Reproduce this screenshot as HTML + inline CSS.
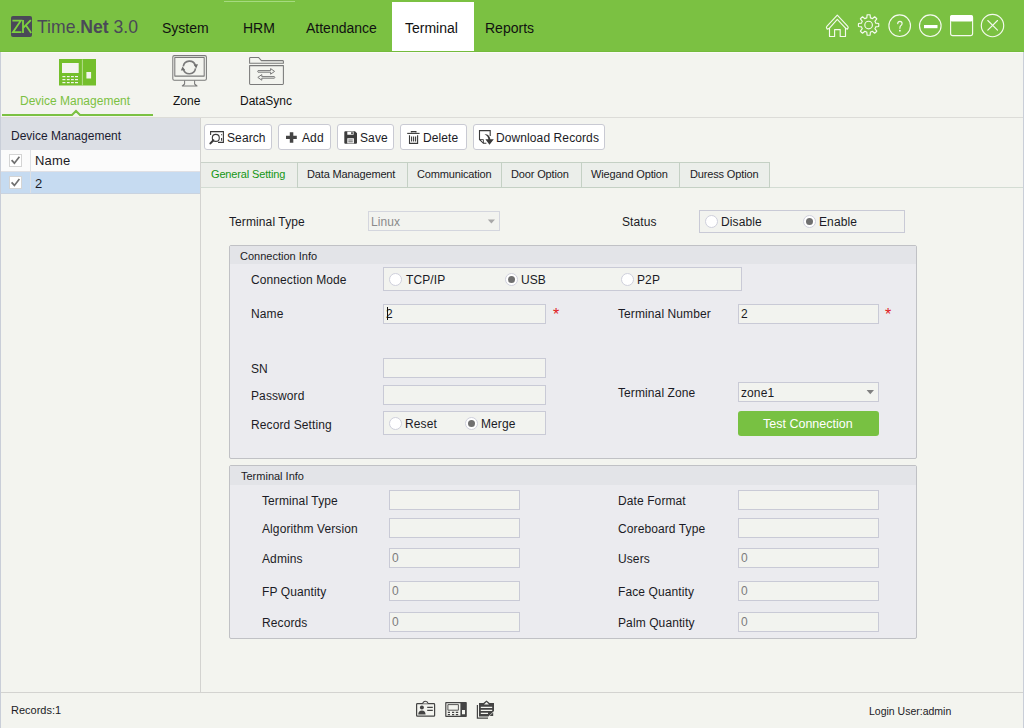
<!DOCTYPE html>
<html><head><meta charset="utf-8">
<style>
*{margin:0;padding:0;box-sizing:border-box}
html,body{width:1024px;height:728px;overflow:hidden;background:#f3f4ef;font-family:"Liberation Sans",sans-serif;color:#1b1b25}
.a{position:absolute;white-space:nowrap}
.t{position:absolute;white-space:nowrap;line-height:1}
#top{position:absolute;left:0;top:0;width:1024px;height:52px;background:#7bc142}
.menu{font-size:14px;color:#111;top:21px !important}
.inp{position:absolute;background:#f2f3ef;border:1px solid #c9cad6}
.radio{position:absolute;width:13px;height:13px;border-radius:50%;background:#fff;border:1px solid #cfd0dc}
.radio.on::after{content:"";position:absolute;left:2px;top:2px;width:7px;height:7px;border-radius:50%;background:#707070}
.lbl{font-size:12px;letter-spacing:0.1px}
.grp{position:absolute;border:1px solid #c0c1c5;border-radius:2px;background:#ebebef}
.grph{position:absolute;left:0;top:0;right:0;height:18px;background:#e3e4e8}
.btn{position:absolute;top:124px;height:26px;background:#fff;border:1px solid #c9cad3;border-radius:3px}
.tab{position:absolute;top:162px;height:26px;background:#ebeeea;border:1px solid #c4d0c4;border-left:none}
.tt{font-size:11px;letter-spacing:-0.15px}
</style></head><body>
<!-- top bar -->
<div id="top"></div>
<div class="a" style="left:224px;top:1px;width:71px;height:1px;background:#a6da80"></div>
<div class="a" style="left:11px;top:16px;width:21px;height:21px;background:#4a4958;border-radius:2px"></div>
<svg class="a" style="left:0;top:0" width="40" height="40" viewBox="0 0 40 40"><g fill="none" stroke="#7ed23f" stroke-width="1.8"><path d="M12.4 20.7H20.8L13 32.2H21.4"/><path d="M23 20V33M30.8 20.2L23.4 27.6M25.9 25.2L31.2 33"/></g></svg>
<div class="t" style="left:37px;top:17px;font-size:19px;color:#4a4958;transform:scaleX(0.925);transform-origin:0 0">Time.<span style="font-weight:bold">Net</span> 3.0</div>

<div class="t menu" style="left:162px;top:20px">System</div>
<div class="t menu" style="left:243px;top:20px">HRM</div>
<div class="t menu" style="left:306px;top:20px">Attendance</div>
<div class="a" style="left:392px;top:2px;width:82px;height:50px;background:#fff"></div>
<div class="t menu" style="left:405px;top:20px">Terminal</div>
<div class="t menu" style="left:485px;top:20px">Reports</div>

<!-- sub toolbar -->
<div class="a" style="left:0;top:51px;width:1024px;height:1px;background:#74bb3c"></div><div class="a" style="left:0;top:52px;width:1024px;height:1px;background:#fafaf7"></div>
<div class="a" style="left:0;top:117px;width:1024px;height:1px;background:#dcdcd8"></div>
<svg class="a" style="left:0;top:108px" width="160" height="10" viewBox="0 108 160 10"><path d="M2 115H72L76 111L80 115H153" fill="none" stroke="#7bc142" stroke-width="2"/></svg>
<div class="t" style="left:20px;top:95px;font-size:12px;color:#7bc142">Device Management</div>
<div class="t" style="left:173px;top:95px;font-size:12px;color:#111">Zone</div>
<div class="t" style="left:240px;top:95px;font-size:12px;color:#111">DataSync</div>

<!-- left panel -->
<div class="a" style="left:0;top:118px;width:200px;height:32px;background:#dcdfe5"></div>
<div class="t" style="left:11px;top:130px;font-size:12px;color:#1b1b30">Device Management</div>
<div class="a" style="left:1px;top:150px;width:199px;height:22px;background:#fbfbfb;border-bottom:1px solid #e0e0e4"></div>
<div class="a" style="left:1px;top:172px;width:199px;height:22px;background:#c6dbf1;border-bottom:1px solid #c9d3e0"></div>
<div class="a" style="left:30px;top:150px;width:1px;height:43px;background:#dde0e4"></div>
<div class="a" style="left:9px;top:154px;width:13px;height:13px;background:#fff;border:1px solid #d4d4d4"></div>
<div class="a" style="left:9px;top:176px;width:13px;height:13px;background:#fff;border:1px solid #d4d4d4"></div>
<div class="t" style="left:35px;top:154px;font-size:13px;letter-spacing:0.2px">Name</div>
<div class="t" style="left:35px;top:177px;font-size:13px">2</div>
<div class="a" style="left:200px;top:118px;width:1px;height:574px;background:#d3d3d0"></div>

<!-- buttons -->
<div class="btn" style="left:204px;width:68px"></div>
<div class="t lbl" style="left:227px;top:132px">Search</div>
<div class="btn" style="left:278px;width:53px"></div>
<div class="t lbl" style="left:302px;top:132px">Add</div>
<div class="btn" style="left:337px;width:57px"></div>
<div class="t lbl" style="left:360px;top:132px">Save</div>
<div class="btn" style="left:400px;width:67px"></div>
<div class="t lbl" style="left:423px;top:132px">Delete</div>
<div class="btn" style="left:473px;width:132px"></div>
<div class="t lbl" style="left:496px;top:132px">Download Records</div>

<!-- tabs -->
<div class="a" style="left:201px;top:187px;width:822px;height:1px;background:#d3dcd3"></div>
<div class="a" style="left:201px;top:162px;width:568px;height:1px;background:#c9d2c9"></div>
<div class="a" style="left:201px;top:163px;width:96px;height:24px;background:#ecEEea"></div>
<div class="tab" style="left:297px;width:111px;border-left:1px solid #c4d0c4"></div>
<div class="tab" style="left:408px;width:94px"></div>
<div class="tab" style="left:502px;width:80px"></div>
<div class="tab" style="left:582px;width:98px"></div>
<div class="tab" style="left:680px;width:90px"></div>
<div class="t tt" style="left:211px;top:169px;color:#149614">General Setting</div>
<div class="t tt" style="left:307px;top:169px">Data Management</div>
<div class="t tt" style="left:417px;top:169px">Communication</div>
<div class="t tt" style="left:511px;top:169px">Door Option</div>
<div class="t tt" style="left:591px;top:169px">Wiegand Option</div>
<div class="t tt" style="left:690px;top:169px">Duress Option</div>

<!-- form -->
<div class="t lbl" style="left:229px;top:216px">Terminal Type</div>
<div class="inp" style="left:368px;top:211px;width:132px;height:20px;border-color:#d4d6de"></div>
<div class="t lbl" style="left:371px;top:216px;color:#8a8a8a">Linux</div>
<div class="t lbl" style="left:622px;top:216px">Status</div>
<div class="inp" style="left:699px;top:210px;width:206px;height:23px"></div>
<div class="radio" style="left:705px;top:215px"></div>
<div class="t lbl" style="left:721px;top:216px">Disable</div>
<div class="radio on" style="left:803px;top:215px"></div>
<div class="t lbl" style="left:819px;top:216px">Enable</div>

<div class="grp" style="left:229px;top:245px;width:688px;height:214px"><div class="grph"></div></div>
<div class="t" style="left:240px;top:251px;font-size:11px">Connection Info</div>
<div class="t lbl" style="left:251px;top:274px">Connection Mode</div>
<div class="inp" style="left:383px;top:267px;width:359px;height:24px"></div>
<div class="radio" style="left:389px;top:273px"></div>
<div class="t lbl" style="left:406px;top:274px">TCP/IP</div>
<div class="radio on" style="left:505px;top:273px"></div>
<div class="t lbl" style="left:521px;top:274px">USB</div>
<div class="radio" style="left:621px;top:273px"></div>
<div class="t lbl" style="left:637px;top:274px">P2P</div>

<div class="t lbl" style="left:251px;top:308px">Name</div>
<div class="inp" style="left:383px;top:304px;width:163px;height:20px"></div>
<div class="t lbl" style="left:386px;top:308px">2</div>
<div class="a" style="left:387px;top:307px;width:1.4px;height:13px;background:#111"></div>
<div class="t" style="left:553px;top:307px;font-size:16px;color:#e02020">*</div>
<div class="t lbl" style="left:618px;top:308px">Terminal Number</div>
<div class="inp" style="left:738px;top:304px;width:141px;height:20px"></div>
<div class="t lbl" style="left:741px;top:308px">2</div>
<div class="t" style="left:885px;top:307px;font-size:16px;color:#e02020">*</div>

<div class="t lbl" style="left:251px;top:363px">SN</div>
<div class="inp" style="left:383px;top:358px;width:163px;height:20px"></div>
<div class="t lbl" style="left:251px;top:390px">Password</div>
<div class="inp" style="left:383px;top:385px;width:163px;height:20px"></div>
<div class="t lbl" style="left:251px;top:419px">Record Setting</div>
<div class="inp" style="left:383px;top:411px;width:163px;height:24px"></div>
<div class="radio" style="left:389px;top:417px"></div>
<div class="t lbl" style="left:405px;top:418px">Reset</div>
<div class="radio on" style="left:465px;top:417px"></div>
<div class="t lbl" style="left:481px;top:418px">Merge</div>

<div class="t lbl" style="left:618px;top:387px">Terminal Zone</div>
<div class="inp" style="left:738px;top:382px;width:141px;height:20px"></div>
<div class="t lbl" style="left:741px;top:387px">zone1</div>
<div class="a" style="left:738px;top:411px;width:141px;height:25px;background:#78c142;border-radius:3px"></div>
<div class="t" style="left:763px;top:418px;font-size:12.5px;color:#fff">Test Connection</div>

<div class="grp" style="left:229px;top:465px;width:688px;height:174px"><div class="grph" style="height:19px"></div></div>
<div class="t" style="left:241px;top:471px;font-size:11px">Terminal Info</div>
<div class="t lbl" style="left:262px;top:495px">Terminal Type</div>
<div class="inp" style="left:389px;top:490px;width:131px;height:20px"></div>
<div class="t lbl" style="left:262px;top:523px">Algorithm Version</div>
<div class="inp" style="left:389px;top:518px;width:131px;height:20px"></div>
<div class="t lbl" style="left:262px;top:553px">Admins</div>
<div class="inp" style="left:389px;top:548px;width:131px;height:20px"></div>
<div class="t lbl" style="left:392px;top:552px;color:#7c7c7c">0</div>
<div class="t lbl" style="left:262px;top:586px">FP Quantity</div>
<div class="inp" style="left:389px;top:581px;width:131px;height:20px"></div>
<div class="t lbl" style="left:392px;top:585px;color:#7c7c7c">0</div>
<div class="t lbl" style="left:262px;top:617px">Records</div>
<div class="inp" style="left:389px;top:612px;width:131px;height:20px"></div>
<div class="t lbl" style="left:392px;top:616px;color:#7c7c7c">0</div>

<div class="t lbl" style="left:618px;top:495px">Date Format</div>
<div class="inp" style="left:738px;top:490px;width:141px;height:20px"></div>
<div class="t lbl" style="left:618px;top:523px">Coreboard Type</div>
<div class="inp" style="left:738px;top:518px;width:141px;height:20px"></div>
<div class="t lbl" style="left:618px;top:553px">Users</div>
<div class="inp" style="left:738px;top:548px;width:141px;height:20px"></div>
<div class="t lbl" style="left:741px;top:552px;color:#7c7c7c">0</div>
<div class="t lbl" style="left:618px;top:586px">Face Quantity</div>
<div class="inp" style="left:738px;top:581px;width:141px;height:20px"></div>
<div class="t lbl" style="left:741px;top:585px;color:#7c7c7c">0</div>
<div class="t lbl" style="left:618px;top:617px">Palm Quantity</div>
<div class="inp" style="left:738px;top:612px;width:141px;height:20px"></div>
<div class="t lbl" style="left:741px;top:616px;color:#7c7c7c">0</div>


<!-- top-right icons -->
<svg class="a" style="left:0;top:0" width="1024" height="52" viewBox="0 0 1024 52">
<g fill="none" stroke="#f4faee" stroke-width="1.15" stroke-linejoin="round" stroke-linecap="round">
<path d="M829.5 36.5V28.2L827.2 29.2Q825.8 27.6 826.8 26.3L837.3 15.2L847.8 26.3Q848.8 27.6 847.4 29.2L845.5 28.2V36.5H840.2V29.6H834.6V36.5Z"/>
<path d="M829.5 28.2L837.3 19.4L845.5 28.2"/>
<path d="M866.79 17.93L867.08 14.91A10.2 10.2 0 0 1 870.12 14.91L870.41 17.93A7.3 7.3 0 0 1 872.32 18.72L874.65 16.79A10.2 10.2 0 0 1 876.81 18.95L874.88 21.28A7.3 7.3 0 0 1 875.67 23.19L878.69 23.48A10.2 10.2 0 0 1 878.69 26.52L875.67 26.81A7.3 7.3 0 0 1 874.88 28.72L876.81 31.05A10.2 10.2 0 0 1 874.65 33.21L872.32 31.28A7.3 7.3 0 0 1 870.41 32.07L870.12 35.09A10.2 10.2 0 0 1 867.08 35.09L866.79 32.07A7.3 7.3 0 0 1 864.88 31.28L862.55 33.21A10.2 10.2 0 0 1 860.39 31.05L862.32 28.72A7.3 7.3 0 0 1 861.53 26.81L858.51 26.52A10.2 10.2 0 0 1 858.51 23.48L861.53 23.19A7.3 7.3 0 0 1 862.32 21.28L860.39 18.95A10.2 10.2 0 0 1 862.55 16.79L864.88 18.72A7.3 7.3 0 0 1 866.79 17.93Z"/>
<circle cx="868.6" cy="25" r="3.8"/>
<circle cx="899.7" cy="25.7" r="10.8"/>
<circle cx="930.3" cy="25.7" r="10.8"/>
<rect x="950.6" y="15.6" width="22" height="20" rx="2.2"/>
<circle cx="992.5" cy="25.5" r="11.2"/>
<path d="M987.8 20.5L997.5 30.2M997.5 20.5L987.8 30.2" stroke-width="1.1"/>
<path d="M897.7 23.6Q897.9 21.3 899.9 21.3Q902.1 21.3 902.1 23.4Q902.1 24.8 900.7 25.7Q899.9 26.2 899.9 28.3"/>
</g>
<rect x="950" y="15" width="23" height="6.5" rx="2" fill="#fff"/>
<rect x="924" y="25" width="13.5" height="3.2" fill="#fff"/>
<circle cx="899.9" cy="30.7" r="0.85" fill="#fff"/>
</svg>

<!-- sub toolbar icons -->
<svg class="a" style="left:0;top:52px" width="300" height="40" viewBox="0 52 300 40">
<path fill="#74bf2c" fill-rule="evenodd" d="M59 59H96V85.6H59Z M62 63H78.7V73H62Z M86.4 72H91.1V78.5H86.4Z"/>
<path stroke="#c5e6a4" stroke-width="0.8" d="M82.4 59.5V85.2"/>
<g fill="#f3f4ef">
<rect x="62.4" y="76" width="3" height="1.2"/><rect x="66.9" y="76" width="2.8" height="1.2"/><rect x="71" y="76" width="2.8" height="1.2"/><rect x="75" y="76" width="3" height="1.2"/>
<rect x="62.4" y="79" width="3" height="1.2"/><rect x="66.9" y="79" width="2.8" height="1.2"/><rect x="71" y="79" width="2.8" height="1.2"/><rect x="75" y="79" width="3" height="1.2"/>
<rect x="62.4" y="82" width="3" height="1.2"/><rect x="66.9" y="82" width="2.8" height="1.2"/><rect x="71" y="82" width="2.8" height="1.2"/><rect x="75" y="82" width="3" height="1.2"/>
</g>
<g fill="none" stroke="#7a7a7a" stroke-width="1.05" stroke-linejoin="round">
<rect x="172.8" y="55.6" width="33.6" height="24.6" rx="1.5"/>
<rect x="174.8" y="57.5" width="29.4" height="18.6"/>
<path d="M184.6 80.4V84L182.3 86H197L194.6 84V80.4"/>
<path d="M183.3 66.4A6.2 6.2 0 0 1 195.4 65.6" stroke-width="1.6"/>
<path d="M195.5 68.4A6.2 6.2 0 0 1 183.4 69.2" stroke-width="1.6"/>
<path d="M249.6 63.3V58.2Q249.6 57.4 250.4 57.4H258.5L261.4 60.6H282.6Q283.4 60.6 283.4 61.4V63.3Z"/>
<path d="M249.6 65.6H283.4V83.6Q283.4 84.4 282.6 84.4H250.4Q249.6 84.4 249.6 83.6Z"/>
<path d="M258 70.6H270.6V68.6L274.6 71.4L270.6 74.2V72.2H258Q257.2 71.4 258 70.6Z" stroke-width="1"/>
<path d="M274.4 76.6H261.8V74.6L257.8 77.4L261.8 80.2V78.2H274.4Q275.2 77.4 274.4 76.6Z" stroke-width="1"/>
</g>
<path fill="#6e6e6e" d="M193.6 64.6L198 64.2L196.2 68.4Z M185.2 70.2L180.8 70.6L182.6 66.4Z"/>
</svg>

<!-- button icons -->
<svg class="a" style="left:200px;top:124px" width="300" height="26" viewBox="200 124 300 26">
<g fill="none" stroke="#3a3a3a" stroke-width="1.1">
<path d="M210.6 135V131.6H223.4V142.4H218"/>
<circle cx="215.8" cy="137.9" r="3.5"/>
<path d="M221.6 134.2V135.2M221.6 138V140.8"/>
</g>
<path d="M213.4 140.2L210.4 143.4" stroke="#3a3a3a" stroke-width="2" stroke-linecap="round"/>
<path fill="#444" d="M289.8 132.2H293.3V135.8H296.8V139H293.3V142.8H289.8V139H286V135.8H289.8Z"/>
<path fill="#3c3c3c" fill-rule="evenodd" d="M344.3 132.3Q344.3 131.3 345.3 131.3H355L357 133.3V142.8Q357 143.8 356 143.8H345.3Q344.3 143.8 344.3 142.8Z M347.3 131.8H353.6V134.8H347.3Z M347.3 138.3H353.9V143.3H347.3Z"/>
<rect x="351.2" y="132.2" width="1.6" height="1.9" fill="#3c3c3c"/>
<path d="M348.3 140H352.8M348.3 141.8H352.8" stroke="#3c3c3c" stroke-width="0.8"/>
<g stroke="#3a3a3a" fill="none" stroke-width="1.1">
<path d="M407.2 133.4H419.6"/>
<path d="M411.5 132.6V131.6H415.8V132.6" stroke-width="1.4"/>
<path d="M409.5 135.3V143.4H417.6V135.3"/>
<path d="M411.6 136.4V141.5M413.6 136.4V141.5M415.6 136.4V141.5"/>
<path d="M490.2 136V130.6H479.5V139.4L483.4 143.3H486.4"/>
<path d="M479.7 139.6H483.4V143.2" stroke-width="0.9"/>
</g>
<path fill="#3a3a3a" d="M484.5 134.3Q489.2 133.8 490.4 139.2H493.8L489.5 144.8L485.4 139.2H488.4Q488 136 484.5 134.3Z"/>
</svg>

<!-- checkmarks -->
<svg class="a" style="left:0;top:150px" width="30" height="44" viewBox="0 150 30 44">
<path d="M11.6 160.2L14.4 163.2L19.4 156.8" fill="none" stroke="#707070" stroke-width="1.7"/>
<path d="M11.6 182.4L14.4 185.4L19.4 179" fill="none" stroke="#707070" stroke-width="1.7"/>
</svg>

<!-- combo arrows -->
<svg class="a" style="left:480px;top:210px" width="20" height="20" viewBox="480 210 20 20"><path d="M487.8 219.6H495L491.4 223.6Z" fill="#a8a8a8"/></svg>
<svg class="a" style="left:860px;top:382px" width="20" height="20" viewBox="860 382 20 20"><path d="M866.6 390H874L870.3 394.2Z" fill="#808080"/></svg>

<!-- status icons -->
<svg class="a" style="left:410px;top:698px" width="90" height="24" viewBox="410 698 90 24">
<rect x="416.6" y="703.6" width="18" height="12.6" rx="0.8" fill="none" stroke="#444" stroke-width="1.2"/>
<path d="M422.8 703.4Q423.2 701.2 425.4 701.2Q427.6 701.2 428 703.4" fill="#f3f4ef" stroke="#444" stroke-width="1.1"/>
<circle cx="421.9" cy="707.6" r="2" fill="#444"/>
<path d="M418.2 714.6Q418.4 710.4 421.9 710.4Q425.4 710.4 425.6 714.6Z" fill="#444"/>
<path d="M427.2 707.4H432.8M427.2 710.4H432.8" stroke="#444" stroke-width="1.1"/>
<path fill="#444" fill-rule="evenodd" d="M446 702H466Q466.8 702 466.8 702.8V716.2Q466.8 717 466 717H446Q445.2 717 445.2 716.2V702.8Q445.2 702 446 702Z M446.4 703.2H460.4V715.8H446.4Z M462 710H465V714.2H462Z"/>
<path fill="none" stroke="#444" stroke-width="0.9" d="M447.9 704.6H458.4V710.2H447.9Z"/>
<path stroke="#444" stroke-width="1.1" d="M447.8 712.4H450M452 712.4H454.2M455.8 712.4H458.2M447.8 714.6H450M452 714.6H454.2M455.8 714.6H458.2"/>
<path fill="none" stroke="#444" stroke-width="1.2" d="M477.4 705V718.2H488"/>
<path fill="#444" d="M479 702.9H483.4L486.5 700.6L489.6 702.9H494V711L488.4 716.6H479Z"/>
<path d="M484 704.6L486.5 701.9L489 704.6Z" fill="#f3f4ef"/>
<path stroke="#f3f4ef" stroke-width="1.2" d="M480.8 707.4H492.2M480.8 710.4H492.2M480.8 713.4H488"/>
<path d="M494.6 711.2V717.4H488.4Z" fill="#f3f4ef"/>
<path d="M493.2 712.4L489.6 716H493.2Z" fill="#444"/>
</svg>

<!-- status bar -->
<div class="a" style="left:0;top:692px;width:1024px;height:1px;background:#d3d3d0"></div>
<div class="t" style="left:11px;top:705px;font-size:11px">Records:1</div>
<div class="t" style="left:869px;top:706px;font-size:10.5px">Login User:admin</div>

<!-- window edges -->
<div class="a" style="left:0;top:52px;width:1px;height:676px;background:#c9ced8"></div>
<div class="a" style="left:1023px;top:52px;width:1px;height:676px;background:#c9ced8"></div>
</body></html>
